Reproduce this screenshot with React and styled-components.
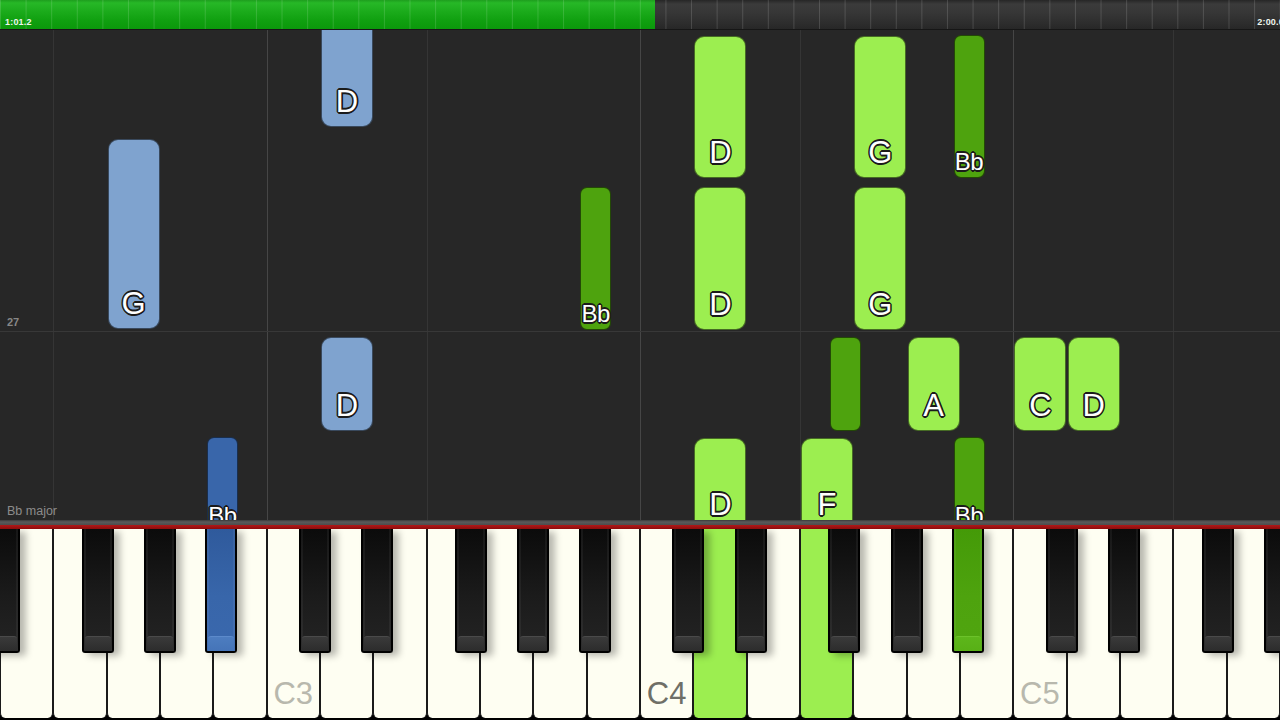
import React from "react";
import styled, { createGlobalStyle } from "styled-components";

const W = 1280 / 24;

const Global = createGlobalStyle`
  html, body { margin: 0; padding: 0; background: #000; }
  body { font-family: "Liberation Sans", Arial, sans-serif; overflow: hidden; }
`;

const whiteNames = [
  "E2", "F2", "G2", "A2", "B2",
  "C3", "D3", "E3", "F3", "G3", "A3", "B3",
  "C4", "D4", "E4", "F4", "G4", "A4", "B4",
  "C5", "D5", "E5", "F5", "G5",
];

const blackOffsets = [
  ["C#", W - 21],
  ["D#", 2 * W - 12],
  ["F#", 4 * W - 25],
  ["G#", 5 * W - 16],
  ["A#", 6 * W - 8],
];

const keyX = {};
whiteNames.forEach((n, i) => (keyX[n] = i * W));
const blackKeys = [];
[2, 3, 4, 5].forEach((oct) => {
  const c = -2 * W + (oct - 2) * 7 * W;
  blackOffsets.forEach(([n, off]) => {
    const name = n + oct;
    keyX[name] = c + off;
    blackKeys.push({ name, x: c + off });
  });
});

const TONES = {
  lg: "#9cee50",
  dg: "#4ea30e",
  lb: "#7fa3cf",
  db: "#3966aa",
};

const notes = [
  { k: "D3", top: -20, h: 116.7, tone: "lb", label: "D" },
  { k: "G2", top: 109, h: 190, tone: "lb", label: "G" },
  { k: "D3", top: 307, h: 94, tone: "lb", label: "D" },
  { k: "A#2", top: 407, h: 95, tone: "db", label: "Bb" },
  { k: "A#3", top: 157, h: 143, tone: "dg", label: "Bb" },
  { k: "D4", top: 6, h: 142, tone: "lg", label: "D" },
  { k: "D4", top: 157, h: 143, tone: "lg", label: "D" },
  { k: "D4", top: 408, h: 92, tone: "lg", label: "D" },
  { k: "G4", top: 6, h: 142, tone: "lg", label: "G" },
  { k: "G4", top: 157, h: 143, tone: "lg", label: "G" },
  { k: "A#4", top: 5, h: 143, tone: "dg", label: "Bb" },
  { k: "A#4", top: 407, h: 95, tone: "dg", label: "Bb" },
  { k: "F#4", top: 307, h: 94, tone: "dg", label: "" },
  { k: "A4", top: 307, h: 94, tone: "lg", label: "A" },
  { k: "C5", top: 307, h: 94, tone: "lg", label: "C" },
  { k: "D5", top: 307, h: 94, tone: "lg", label: "D" },
  { k: "F4", top: 408, h: 92, tone: "lg", label: "F" },
];

const gridLines = [
  { x: 53.33, strong: false },
  { x: 266.67, strong: true },
  { x: 426.67, strong: false },
  { x: 640, strong: true },
  { x: 800, strong: false },
  { x: 1013.33, strong: true },
  { x: 1173.33, strong: false },
];

const litKeys = { D4: "lg", F4: "lg", "A#4": "dg", "A#2": "db" };

/* ---------- layout ---------- */

const Screen = styled.div`
  width: 1280px;
  height: 720px;
  display: flex;
  flex-direction: column;
  overflow: hidden;
  background: #000;
`;

/* ---------- time bar ---------- */

const TimeBar = styled.div`
  position: relative;
  flex: none;
  height: 29px;
  display: flex;
  border-bottom: 1px solid #161616;
`;

const Played = styled.div`
  height: 100%;
  background: linear-gradient(#1e9e1e 0%, #27b827 10%, #1bab1b 40%, #10a010 70%, #0b980b 100%);
`;

const Remaining = styled.div`
  flex: 1;
  background: linear-gradient(#262626 0%, #3b3b3b 14%, #363636 45%, #2d2d2d 80%, #272727 100%);
`;

const Ticks = styled.div`
  position: absolute;
  inset: 0;
  pointer-events: none;
  background-image: linear-gradient(to right, rgba(255, 255, 255, 0.14) 0 1px, transparent 1px);
  background-size: 25.6px 100%;
`;

const TimeLabel = styled.span`
  position: absolute;
  bottom: 2px;
  ${(p) => (p.$right ? "right: -4px;" : "left: 5px;")}
  font: bold 9px "Liberation Sans", Arial, sans-serif;
  color: #eef6ee;
  letter-spacing: 0.2px;
`;

/* ---------- roll ---------- */

const Roll = styled.div`
  position: relative;
  flex: none;
  height: 490px;
  overflow: hidden;
  background: #272727;
`;

const VLine = styled.div`
  position: absolute;
  top: 0;
  bottom: 0;
  width: 1px;
  background: ${(p) => (p.$strong ? "#464646" : "#353535")};
`;

const HLine = styled.div`
  position: absolute;
  left: 0;
  right: 0;
  top: 301px;
  height: 1px;
  background: #383838;
`;

const MeasureNo = styled.span`
  position: absolute;
  left: 7px;
  top: 286px;
  font: bold 11px "Liberation Sans", Arial, sans-serif;
  color: #878787;
`;

const KeyName = styled.span`
  position: absolute;
  left: 7px;
  bottom: 2px;
  font: 12.5px "Liberation Sans", Arial, sans-serif;
  color: #8c8c8c;
`;

const Note = styled.div`
  position: absolute;
  box-sizing: border-box;
  display: flex;
  align-items: flex-end;
  justify-content: center;
  border: 1.5px solid rgba(0, 0, 0, 0.55);
  border-radius: ${(p) => (p.$narrow ? "7px" : "10px")};
  background: ${(p) => TONES[p.$tone]};
  padding-bottom: ${(p) => (p.$narrow ? "3px" : "9px")};
`;

const NoteLabel = styled.span`
  font-family: "Liberation Sans", Arial, sans-serif;
  font-size: ${(p) => (p.$narrow ? "24px" : "31px")};
  line-height: 1;
  color: #fff;
  letter-spacing: ${(p) => (p.$narrow ? "-0.5px" : "0")};
  text-shadow:
    -1.6px 0 0 #1b1b1b, 1.6px 0 0 #1b1b1b, 0 -1.6px 0 #1b1b1b, 0 1.6px 0 #1b1b1b,
    -1.1px -1.1px 0 #1b1b1b, 1.1px -1.1px 0 #1b1b1b, -1.1px 1.1px 0 #1b1b1b, 1.1px 1.1px 0 #1b1b1b;
`;

/* ---------- keyboard ---------- */

const Divider = styled.div`
  flex: none;
  height: 5px;
  background: linear-gradient(#3a3a3a 0%, #5a5a5a 40%, #4c4c4c 100%);
`;

const RedStrip = styled.div`
  flex: none;
  height: 4px;
  background: linear-gradient(#b01818, #8c0c0c);
`;

const Keyboard = styled.div`
  position: relative;
  flex: 1;
  display: flex;
  overflow: hidden;
  background: #000;
`;

const WhiteKey = styled.div`
  flex: 0 0 ${W}px;
  box-sizing: border-box;
  height: 189px;
  border-left: 1px solid #1a1a1a;
  border-right: 1px solid #1a1a1a;
  border-radius: 0 0 5px 5px;
  background: ${(p) => (p.$lit ? TONES[p.$lit] : "#fefef2")};
  display: flex;
  align-items: flex-end;
  justify-content: center;
  padding-bottom: 9px;
`;

const OctaveLabel = styled.span`
  font-family: "Liberation Sans", Arial, sans-serif;
  font-size: 31px;
  line-height: 1;
  color: ${(p) => (p.$dark ? "#6f6f67" : "#b8b8ad")};
`;

const blackBody = {
  none: ["#0b0b0b", "#1b1b1b", "#242424", "#2c2c2c", "#3a3a3a", "#4a4a4a"],
  db: ["#2f5a9c", "#3866aa", "#3a68ad", "#4574b8", "#4d7dc0", "#5c8acb"],
  dg: ["#449a08", "#4ea30e", "#50a510", "#58b016", "#5db61b", "#6cc22a"],
};

const BlackKey = styled.div`
  position: absolute;
  top: 0;
  width: 32px;
  height: 124px;
  box-sizing: border-box;
  border: 2px solid #000;
  border-top: none;
  border-radius: 0 0 3px 3px;
  background: linear-gradient(
    ${(p) => blackBody[p.$tone][0]} 0%,
    ${(p) => blackBody[p.$tone][1]} 55%,
    ${(p) => blackBody[p.$tone][2]} 100%
  );
  box-shadow: 6px 3px 7px rgba(0, 0, 0, 0.28),
    inset 2px 0 0 rgba(255, 255, 255, 0.05), inset -2px 0 0 rgba(255, 255, 255, 0.05);

  &::after {
    content: "";
    position: absolute;
    left: 1px;
    right: 1px;
    bottom: 0;
    height: 14px;
    border-radius: 3px 3px 1px 1px;
    border-top: 1px solid ${(p) => blackBody[p.$tone][5]};
    background: linear-gradient(
      ${(p) => blackBody[p.$tone][4]},
      ${(p) => blackBody[p.$tone][3]}
    );
  }
`;

export default function App() {
  return (
    <Screen>
      <Global />
      <TimeBar>
        <Played style={{ width: 655 }} />
        <Remaining />
        <Ticks />
        <TimeLabel>1:01.2</TimeLabel>
        <TimeLabel $right>2:00.0</TimeLabel>
      </TimeBar>

      <Roll>
        {gridLines.map((g) => (
          <VLine key={g.x} $strong={g.strong} style={{ left: Math.round(g.x) }} />
        ))}
        <HLine />
        <MeasureNo>27</MeasureNo>
        <KeyName>Bb major</KeyName>
        {notes.map((n, i) => {
          const narrow = n.k.includes("#");
          const left = keyX[n.k] + (narrow ? 1.5 : 1);
          const width = narrow ? 31 : 52;
          return (
            <Note
              key={i}
              $narrow={narrow}
              $tone={n.tone}
              style={{ left, top: n.top, width, height: n.h }}
            >
              {n.label && <NoteLabel $narrow={narrow}>{n.label}</NoteLabel>}
            </Note>
          );
        })}
      </Roll>

      <Divider />
      <RedStrip />

      <Keyboard>
        {whiteNames.map((n) => (
          <WhiteKey key={n} $lit={litKeys[n]}>
            {n.startsWith("C") && <OctaveLabel $dark={n === "C4"}>{n}</OctaveLabel>}
          </WhiteKey>
        ))}
        {blackKeys.map((b) => (
          <BlackKey key={b.name} $tone={litKeys[b.name] || "none"} style={{ left: b.x }} />
        ))}
      </Keyboard>
    </Screen>
  );
}
